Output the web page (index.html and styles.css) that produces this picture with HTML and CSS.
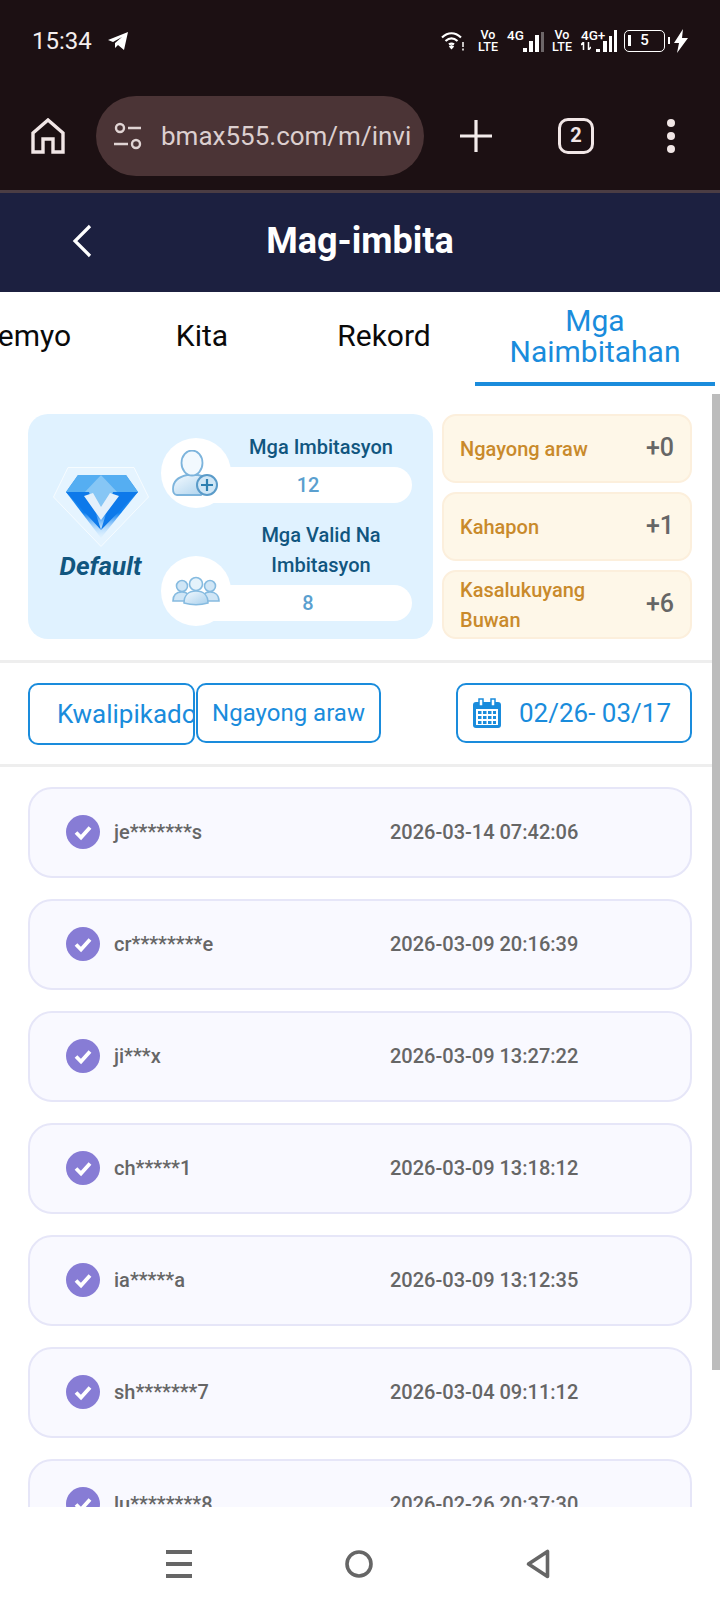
FILE: index.html
```html
<!DOCTYPE html>
<html lang="en">

<head>
    <meta charset="UTF-8">
    <meta name="viewport" content="width=device-width, initial-scale=1.0">
    <title>Mag-imbita</title>
    <link rel="stylesheet" href="styles.css">
</head>

<body>
    <svg class="defs" width="0" height="0">
        <defs>
            <linearGradient id="personFill" x1="0" y1="0" x2="1" y2="1">
                <stop offset="0" stop-color="#f4faff" />
                <stop offset="1" stop-color="#a9d0ec" />
            </linearGradient>
            <linearGradient id="gemFill" x1="0" y1="0" x2="0" y2="1">
                <stop offset="0" stop-color="#3d9df0" />
                <stop offset="0.6" stop-color="#0f80f0" />
                <stop offset="1" stop-color="#bfe3ff" stop-opacity="0.1" />
            </linearGradient>
            <symbol id="check" viewBox="0 0 34 34">
                <circle cx="17" cy="17" r="17" fill="#877cd5" />
                <path d="M10 17.500l5 5 9-10" fill="none" stroke="#fff" stroke-width="3.800" />
            </symbol>
        </defs>
    </svg>

    <div class="phone-top">
        <div class="status">
            <div class="status-left">
                <span class="time">15:34</span>
                <svg class="plane" viewBox="0 0 20 18" width="20" height="18">
                    <path d="M0 8L20 0 16 18 10 13 7 16 7 11 14 5 5 10z" fill="#fff" />
                </svg>
            </div>
            <div class="status-right">
                <svg class="wifi" viewBox="0 0 24 20" width="24" height="20">
                    <path d="M1 6.500c6-5.500 13-5.500 19 0M4.500 10c4-3.500 8-3.500 12 0M8 13.500c2-1.500 3-1.500 5 0" fill="none" stroke="#fff" stroke-width="2.200" />
                    <path d="M7.800 15.500l2.700-1.500 2.700 1.500-2.700 3z" fill="#fff" />
                    <path d="M22 11v5M22 17.500v2" stroke="#fff" stroke-width="1.500" />
                </svg>
                <span class="volte">Vo<br>LTE</span>
                <span class="net">4G</span>
                <svg class="bars" viewBox="0 0 21 22" width="21" height="22">
                    <path d="M0 18h4v4H0zM6 11h4v11H6zM12 5h4v17h-4z" fill="#fff" />
                    <path d="M18 2h3v20h-3z" fill="#6d6668" />
                </svg>
                <span class="volte">Vo<br>LTE</span>
                <span class="net net-plus">4G+
                    <svg viewBox="0 0 10 8" width="10" height="8">
                        <path d="M2.500 8V0L0 3M7.500 0v8L10 5" fill="none" stroke="#fff" stroke-width="1.500" />
                    </svg>
                </span>
                <svg class="bars bars-full" viewBox="0 0 21 22" width="21" height="22">
                    <path d="M0 19h4v3H0zM7 11h4v11H7zM13 6h3v16h-3zM18 0h3v22h-3z" fill="#fff" />
                </svg>
                <div class="battery"><span>5</span></div>
                <svg class="bolt" viewBox="0 0 14 24" width="14" height="24">
                    <path d="M9 0L0 14h5l-2 10 11-15H8z" fill="#fff" />
                </svg>
            </div>
        </div>

        <div class="toolbar">
            <svg class="home" viewBox="0 0 34 36" width="34" height="36">
                <path d="M2 34V15L17 2l15 13v19H22V21H12v13z" fill="none" stroke="#f1e6e6" stroke-width="3.400" />
            </svg>
            <div class="url">
                <svg viewBox="0 0 30 30" width="30" height="30">
                    <circle cx="7" cy="7" r="4" fill="none" stroke="#e0d4d4" stroke-width="2.400" />
                    <path d="M15 7h13M1 23h14" stroke="#e0d4d4" stroke-width="2.600" />
                    <circle cx="23" cy="23" r="4" fill="none" stroke="#e0d4d4" stroke-width="2.400" />
                </svg>
                <span>bmax555.com/m/invi</span>
            </div>
            <svg class="plus" viewBox="0 0 32 32" width="32" height="32">
                <path d="M16 0v32M0 16h32" stroke="#f4ecec" stroke-width="3.200" />
            </svg>
            <div class="tab-count">2</div>
            <div class="dots"><i></i><i></i><i></i></div>
        </div>
    </div>

    <header class="app-head">
        <svg class="back" viewBox="0 0 20 34" width="20" height="34">
            <path d="M18 2L3 17l15 15" fill="none" stroke="#fff" stroke-width="3.200" />
        </svg>
        <h1>Mag-imbita</h1>
    </header>

    <nav class="tabs">
        <div class="tab">Premyo</div>
        <div class="tab">Kita</div>
        <div class="tab">Rekord</div>
        <div class="tab active">Mga Naimbitahan</div>
    </nav>

    <main class="content">
        <div class="scrollbar"></div>

        <section class="summary">
            <div class="card-blue">
                <div class="level">
                    <svg class="gem" viewBox="0 0 96 80" width="96" height="80">
                        <path d="M15 .5h66L95.500 30 48 79.500.5 30z" fill="#eef8ff" fill-opacity=".35" stroke="#fff" stroke-opacity=".7" />
                        <path d="M25 8h48l12 17-37 46-35-46z" fill="url(#gemFill)" />
                        <path d="M25 8h23L36 25H13zM73 8H48l12 17h25z" fill="#55aef2" />
                        <path d="M48 8l17 18-17 20-17-20z" fill="#86c6f5" />
                        <path d="M13 25h23l12 38zM85 25H60L48 63z" fill="#0d79ea" />
                        <path d="M31 29l9-3 8 14 9-14 9 3-18 24z" fill="#e4f0fb" />
                    </svg>
                    <div class="level-name">Default</div>
                </div>
                <div class="stats">
                    <div class="stat">
                        <div class="stat-label">Mga Imbitasyon</div>
                        <div class="stat-value">12</div>
                        <div class="stat-icon">
                            <svg viewBox="0 0 48 46" width="48" height="46">
                                <path d="M1 39c0-8 5-12 14-14h11c5 1 9 3 11 6l-8 14H5c-3 0-4-3-4-6z" fill="url(#personFill)" stroke="#7db4dc" stroke-width="1.800" />
                                <ellipse cx="20" cy="13" rx="10.500" ry="12.500" fill="#f2f9fe" stroke="#7db4dc" stroke-width="1.800" />
                                <circle cx="35" cy="35" r="10" fill="#cfe6f6" stroke="#5a9bc9" stroke-width="2" />
                                <path d="M35 29v12M29 35h12" stroke="#2d7fb0" stroke-width="2.200" />
                            </svg>
                        </div>
                    </div>
                    <div class="stat">
                        <div class="stat-label">Mga Valid Na Imbitasyon</div>
                        <div class="stat-value">8</div>
                        <div class="stat-icon">
                            <svg viewBox="0 0 48 30" width="48" height="30">
                                <g fill="#d0e6f6" stroke="#86bbe0" stroke-width="1.600">
                                    <circle cx="10" cy="10" r="5.500" />
                                    <circle cx="38" cy="10" r="5.500" />
                                    <path d="M1 25c0-6 3-9 9-9s8 3 8 9zM30 25c0-6 3-9 8-9s9 3 9 9z" />
                                    <circle cx="24" cy="8" r="6.500" fill="#e4f2fb" />
                                    <path d="M12 27c0-8 5-12 12-12s12 4 12 12c-7 2-17 2-24 0z" fill="url(#personFill)" />
                                </g>
                            </svg>
                        </div>
                    </div>
                </div>
            </div>

            <div class="counts">
                <div class="count"><span>Ngayong araw</span><b>+0</b></div>
                <div class="count"><span>Kahapon</span><b>+1</b></div>
                <div class="count"><span>Kasalukuyang Buwan</span><b>+6</b></div>
            </div>
        </section>

        <section class="filters">
            <div class="filter filter-clip">Kwalipikado</div>
            <div class="filter filter-day">Ngayong araw</div>
            <div class="filter filter-date">
                <svg viewBox="0 0 28 30" width="28" height="30">
                    <rect x="0" y="4" width="28" height="26" rx="3" fill="#1a8cdc" />
                    <path d="M6 1h4v7H6zM18 1h4v7h-4z" fill="#fff" stroke="#1a8cdc" stroke-width="1.500" />
                    <path d="M3 11h22v16H3z" fill="#fff" />
                    <path d="M5 13h3.500v3H5zM10 13h3.500v3H10zM15 13h3.500v3H15zM20 13h3v3h-3zM5 18h3.500v3H5zM10 18h3.500v3H10zM15 18h3.500v3H15zM20 18h3v3h-3zM5 23h3.500v3H5zM10 23h3.500v3H10zM15 23h3.500v3H15zM20 23h3v3h-3z" fill="#1a8cdc" />
                </svg>
                <span>02/26- 03/17</span>
            </div>
        </section>

        <section class="list">
            <div class="row"><svg class="tick"><use href="#check" /></svg><span class="who">je*******s</span><span class="when">2026-03-14 07:42:06</span></div>
            <div class="row"><svg class="tick"><use href="#check" /></svg><span class="who">cr********e</span><span class="when">2026-03-09 20:16:39</span></div>
            <div class="row"><svg class="tick"><use href="#check" /></svg><span class="who">ji***x</span><span class="when">2026-03-09 13:27:22</span></div>
            <div class="row"><svg class="tick"><use href="#check" /></svg><span class="who">ch*****1</span><span class="when">2026-03-09 13:18:12</span></div>
            <div class="row"><svg class="tick"><use href="#check" /></svg><span class="who">ia*****a</span><span class="when">2026-03-09 13:12:35</span></div>
            <div class="row"><svg class="tick"><use href="#check" /></svg><span class="who">sh*******7</span><span class="when">2026-03-04 09:11:12</span></div>
            <div class="row"><svg class="tick"><use href="#check" /></svg><span class="who">lu********8</span><span class="when">2026-02-26 20:37:30</span></div>
        </section>
    </main>

    <footer class="sys-nav">
        <svg viewBox="0 0 26 28" width="26" height="28">
            <path d="M0 2h26M0 14h26M0 26h26" stroke="#666" stroke-width="4" />
        </svg>
        <svg viewBox="0 0 28 28" width="28" height="28">
            <circle cx="14" cy="14" r="12" fill="none" stroke="#666" stroke-width="3.600" />
        </svg>
        <svg viewBox="0 0 24 30" width="24" height="30">
            <path d="M21.500 2.500v25L2.500 15z" fill="none" stroke="#666" stroke-width="3.600" stroke-linejoin="round" />
        </svg>
    </footer>
</body>

</html>
```

FILE: styles.css
```css
* {
    box-sizing: border-box;
}

body {
    margin: 0;
    width: 720px;
    height: 1612px;
    display: flex;
    flex-direction: column;
    overflow: hidden;
    background: #fff;
    font-family: Roboto, sans-serif;
}

.defs {
    position: absolute;
}

/* phone + browser chrome */
.phone-top {
    height: 193px;
    flex: none;
    background: #1c1013;
    border-bottom: 3px solid #4b3d44;
}

.status {
    height: 82px;
    display: flex;
    justify-content: space-between;
    align-items: center;
    padding: 0 32px 0 32px;
}

.status-left {
    display: flex;
    align-items: center;
    gap: 16px;
}

.time {
    color: #f4eeee;
    font-size: 24px;
}

.status-right {
    display: flex;
    align-items: center;
    color: #fff;
}

.wifi {
    margin-right: 13px;
}

.volte {
    width: 20px;
    margin-right: 9px;
    font-size: 12.500px;
    line-height: 12px;
    text-align: center;
    font-weight: 500;
}

.net {
    width: 16px;
    align-self: flex-start;
    font-size: 13.500px;
    line-height: 12px;
    font-weight: 500;
    white-space: nowrap;
}

.net-plus {
    width: 15px;
}

.net-plus svg {
    display: block;
    margin-top: 1px;
}

.bars {
    margin-right: 8px;
}

.bars-full {
    margin-right: 7px;
}

.battery {
    position: relative;
    width: 41px;
    height: 22px;
    margin-right: 9px;
    border: 1.500px solid #fff;
    border-radius: 5px;
    font-size: 15px;
    line-height: 19px;
    text-align: center;
    font-weight: 500;
}

.battery::before {
    content: "";
    position: absolute;
    left: 3px;
    top: 4px;
    width: 3px;
    height: 11px;
    background: #fff;
}

.battery::after {
    content: "";
    position: absolute;
    right: -6px;
    top: 6px;
    width: 2px;
    height: 7px;
    background: #fff;
}

.toolbar {
    height: 108px;
    display: flex;
    align-items: center;
    padding-left: 31px;
}

.url {
    width: 328px;
    height: 80px;
    margin-left: 31px;
    padding-left: 17px;
    display: flex;
    align-items: center;
    gap: 18px;
    border-radius: 40px;
    background: #4b3436;
    overflow: hidden;
}

.url span {
    width: 250px;
    overflow: hidden;
    white-space: nowrap;
    color: #dccfcf;
    font-size: 26px;
}

.plus {
    margin-left: 36px;
}

.tab-count {
    width: 36px;
    height: 36px;
    margin-left: 66px;
    border: 3.500px solid #f1e6e6;
    border-radius: 10px;
    color: #f1e6e6;
    font-size: 20px;
    font-weight: 700;
    line-height: 29px;
    text-align: center;
}

.dots {
    margin-left: 73px;
    display: flex;
    flex-direction: column;
    gap: 5px;
}

.dots i {
    width: 8px;
    height: 8px;
    border-radius: 50%;
    background: #f1e6e6;
}

/* app header */
.app-head {
    height: 99px;
    flex: none;
    padding-bottom: 4px;
    position: relative;
    background: #1c2040;
    display: flex;
    align-items: center;
    justify-content: center;
}

.app-head h1 {
    margin: 0;
    color: #fff;
    font-size: 36px;
    font-weight: 700;
}

.back {
    position: absolute;
    left: 72px;
    top: 31px;
}

/* tabs */
.tabs {
    height: 94px;
    flex: none;
    padding-right: 5px;
    display: flex;
    justify-content: flex-end;
    overflow: hidden;
}

.tab {
    flex: none;
    width: 182px;
    padding-bottom: 8px;
    display: flex;
    align-items: center;
    justify-content: center;
    color: #0a0a0a;
    font-size: 30px;
    line-height: 31px;
    text-align: center;
}

.tab.active {
    width: 240px;
    padding: 0 30px 2px;
    color: #1a8cdc;
    border-bottom: 4px solid #1a8cdc;
}

/* main */
.content {
    flex: 1;
    min-height: 0;
    position: relative;
    overflow: hidden;
}

.scrollbar {
    position: absolute;
    right: 0;
    top: 8px;
    width: 8px;
    height: 976px;
    background: #bcbcbc;
}

.summary {
    height: 277px;
    padding: 28px 28px 0;
    display: flex;
    gap: 9px;
    border-bottom: 3px solid #eee;
}

.card-blue {
    width: 405px;
    height: 225px;
    padding: 18px 21px 0 12px;
    display: flex;
    border-radius: 20px;
    background: #e0f2ff;
}

.level {
    width: 121px;
    padding-top: 35px;
    display: flex;
    flex-direction: column;
    align-items: center;
}

.level-name {
    margin-top: 4px;
    color: #11567f;
    font-size: 26px;
    font-weight: 700;
    font-style: italic;
}

.stats {
    flex: 1;
    display: flex;
    flex-direction: column;
    gap: 17px;
}

.stat {
    position: relative;
}

.stat-label {
    margin-left: 69px;
    margin-bottom: 5px;
    color: #11567f;
    font-size: 20px;
    font-weight: 500;
    line-height: 30px;
    text-align: center;
}

.stat-value {
    height: 36px;
    margin-left: 35px;
    padding-left: 8px;
    border-radius: 18px;
    background: #fff;
    color: #5a9fcf;
    font-size: 20px;
    font-weight: 500;
    line-height: 36px;
    text-align: center;
}

.stat-icon {
    position: absolute;
    left: 0;
    bottom: -5px;
    width: 70px;
    height: 70px;
    display: flex;
    align-items: center;
    justify-content: center;
    border-radius: 50%;
    background: #fff;
}

.counts {
    width: 250px;
    height: 225px;
    display: flex;
    flex-direction: column;
    gap: 9px;
}

.count {
    height: 69px;
    padding: 0 16px 0 16px;
    display: flex;
    align-items: center;
    justify-content: space-between;
    border: 2px solid #fcefdc;
    border-radius: 14px;
    background: #fef7e8;
}

.count span {
    width: 150px;
    color: #c98a2b;
    font-size: 20px;
    font-weight: 500;
    line-height: 30px;
}

.count b {
    margin-top: -2px;
    color: #666;
    font-size: 25px;
    font-weight: 500;
}

/* filters */
.filters {
    height: 104px;
    padding: 20px 28px 0;
    display: flex;
    align-items: flex-start;
    border-bottom: 3px solid #eee;
}

.filter {
    height: 60px;
    display: flex;
    align-items: center;
    border: 2px solid #1a8cdc;
    border-radius: 10px;
    color: #1a8cdc;
    white-space: nowrap;
    overflow: hidden;
}

.filter-clip {
    width: 167px;
    height: 62px;
    padding-left: 27px;
    font-size: 26px;
}

.filter-day {
    width: 185px;
    margin-left: 1px;
    justify-content: center;
    font-size: 24px;
}

.filter-date {
    width: 236px;
    margin-left: auto;
    padding-left: 15px;
    gap: 18px;
    font-size: 26px;
}

/* list */
.list {
    padding: 20px 28px 0;
    display: flex;
    flex-direction: column;
    gap: 21px;
}

.row {
    height: 91px;
    flex: none;
    padding: 0 0 2px 36px;
    display: flex;
    align-items: center;
    border: 2px solid #e6e6f8;
    border-radius: 24px;
    background: #f9f9ff;
    color: #666;
    font-size: 20px;
    font-weight: 500;
}

.tick {
    width: 34px;
    height: 34px;
    flex: none;
}

.who {
    width: 276px;
    margin-left: 14px;
}

/* system nav */
.sys-nav {
    height: 105px;
    flex: none;
    padding: 8px 5px 0 0;
    display: flex;
    align-items: center;
    justify-content: center;
    gap: 153px;
    background: #fff;
}
```
